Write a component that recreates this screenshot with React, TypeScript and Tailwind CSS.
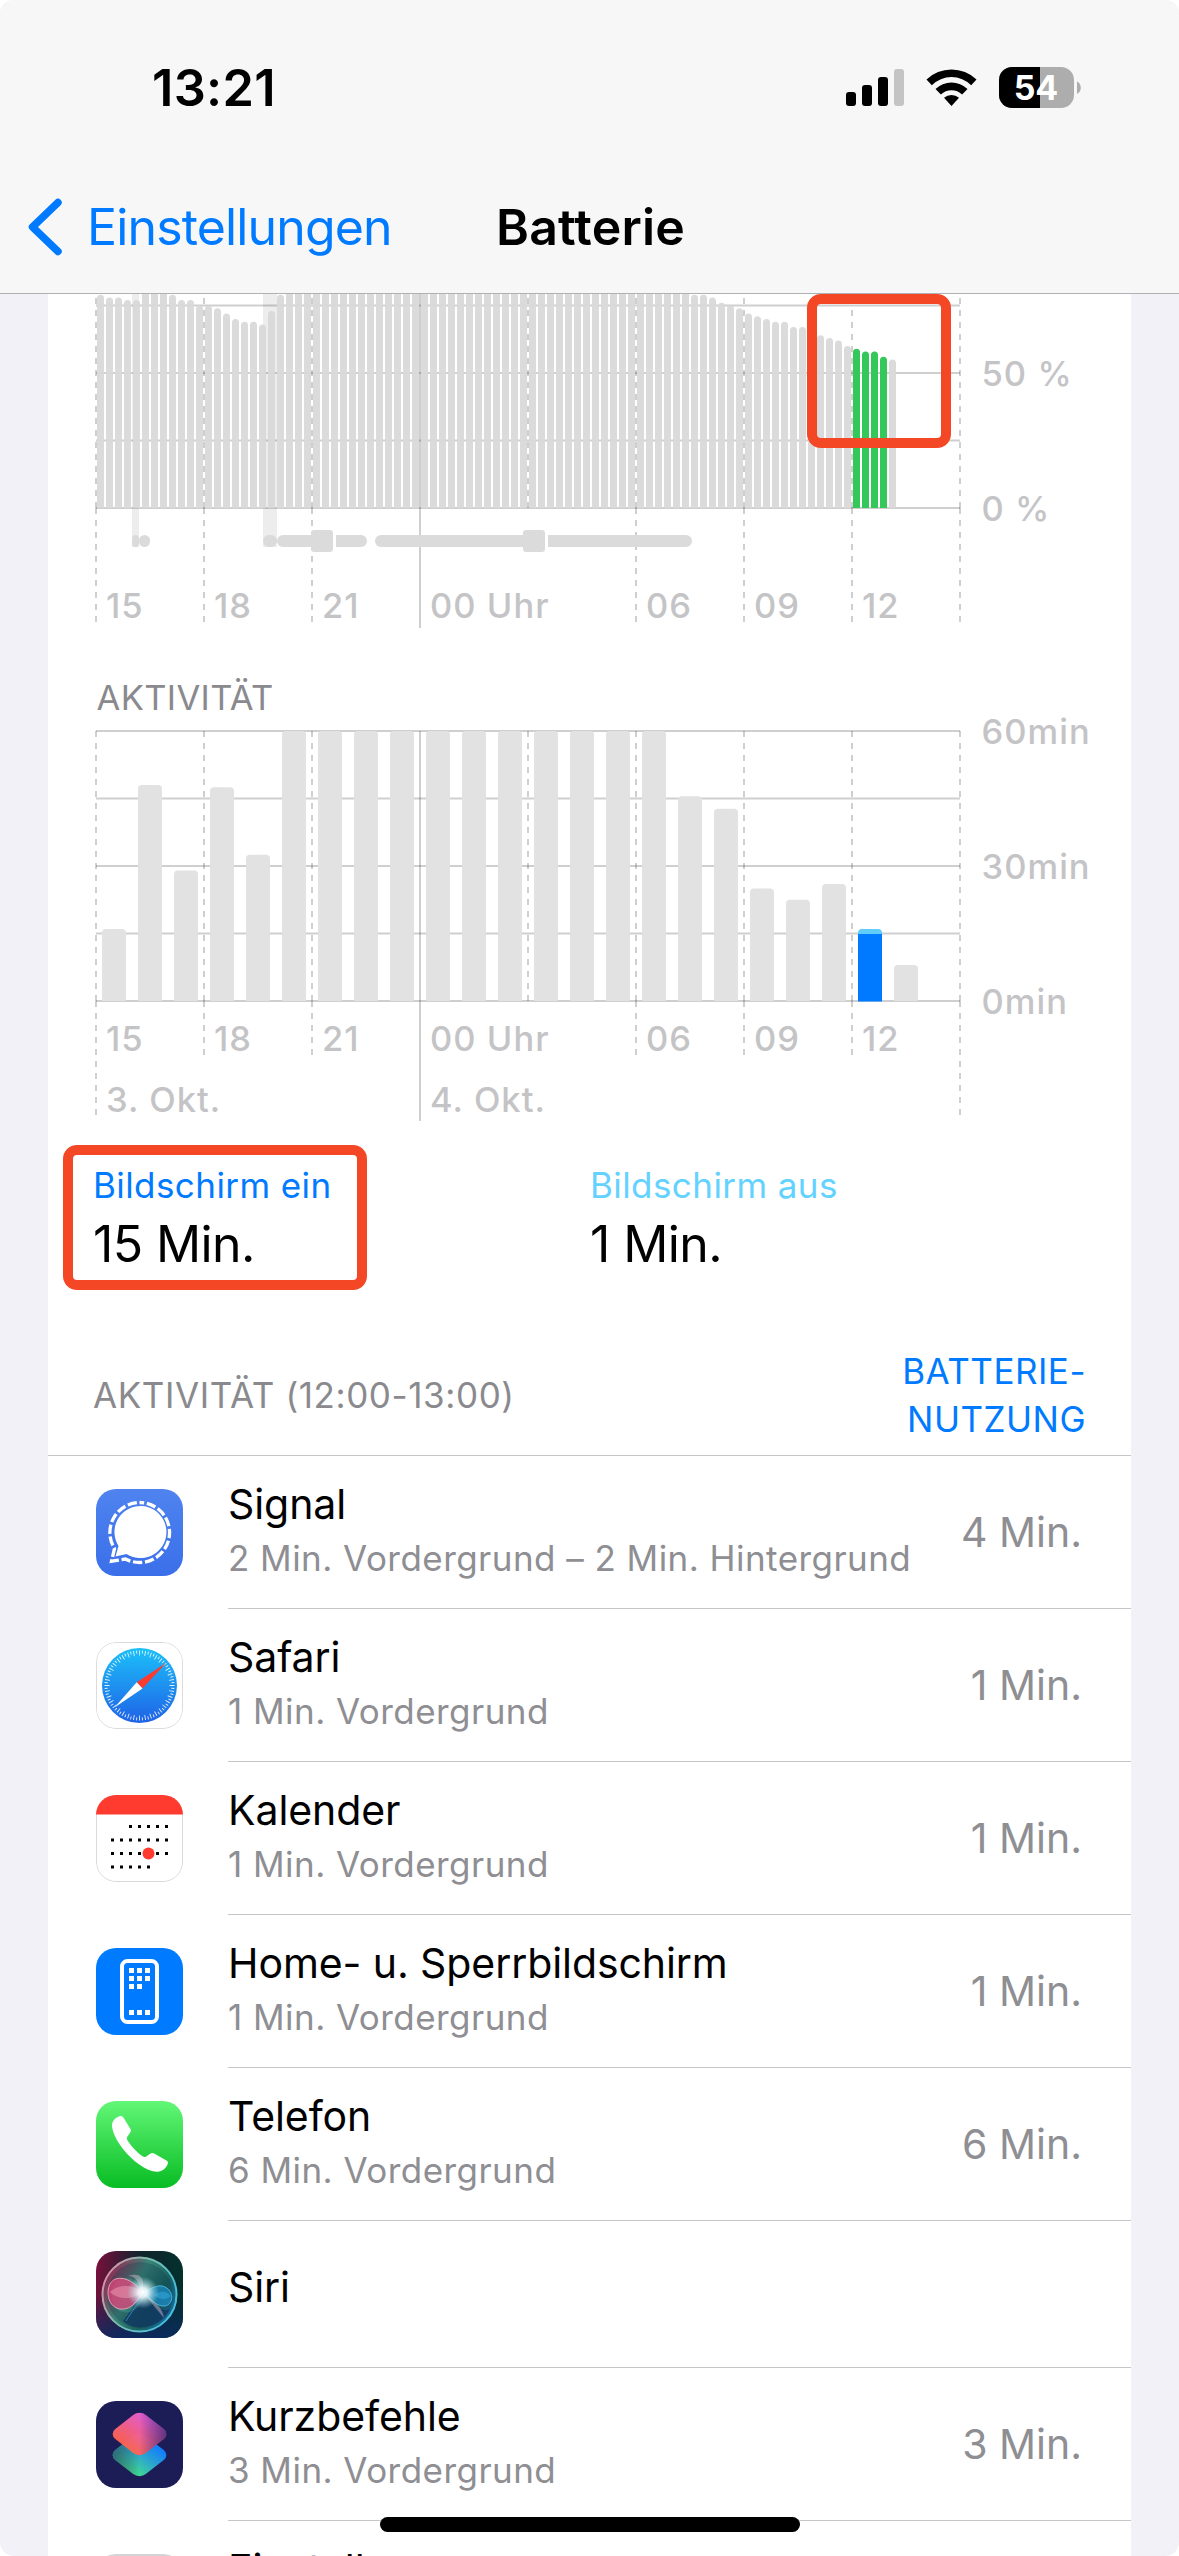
import type { ReactNode } from "react";

const HOURS = ["15", "18", "21", "00 Uhr", null, "06", "09", "12", null];

const LEVELS = [
  79, 78, 78, 77, 77, 84, 90, 84, 79, 77, 77, 75, 75, 74, 72, 70, 69, 69, 68,
  73, 79,
  ...Array(45).fill(100),
  79, 79, 78, 76, 75, 74, 72, 71, 70, 69, 69, 67, 67, 65, 64, 63, 62, 60, 59,
  58, 58, 56, 55,
];

const ACTIVITY = [
  16, 48, 29, 47.5, 32.5, 60, 60, 60, 60, 60, 60, 60, 60, 60, 60, 60, 45.5,
  42.7, 25, 22.5, 26, 16, 8,
];

function StatusIcons() {
  return (
    <svg width="236" height="42" viewBox="0 0 236 42">
      <rect x="0" y="25" width="10" height="14" rx="3" />
      <rect x="16" y="18" width="10" height="21" rx="3" />
      <rect x="32" y="10" width="10" height="29" rx="3" />
      <rect x="48" y="2" width="10" height="37" rx="3" fill="#c4c4c5" />
      <path d="M80.5 12.6a36 36 0 0 1 50 0l-5.3 5.6a28 28 0 0 0-39.4 0z" />
      <path d="M89.5 22a23 23 0 0 1 32 0l-5.4 5.6a15 15 0 0 0-21.2 0z" />
      <path d="M98 30.8a11.5 11.5 0 0 1 15 0L105.5 39z" />
      <clipPath id="battery">
        <rect x="153" y="0" width="75" height="41" rx="13" />
      </clipPath>
      <g clipPath="url(#battery)">
        <rect x="153" width="75" height="41" fill="#adadae" />
        <rect x="153" width="41" height="41" />
      </g>
      <path d="M231 14.5a7 7 0 0 1 0 12.4z" fill="#adadae" />
      <text
        x="190"
        y="33"
        textAnchor="middle"
        fill="#fff"
        className="text-[34px] font-bold"
      >
        54
      </text>
    </svg>
  );
}

function Header() {
  return (
    <header className="h-[294px] border-b border-[#b1b1b4] bg-[#f7f7f8]">
      <div className="flex h-[176px] items-center justify-between pr-[97px] pl-[152px]">
        <span className="text-[50.5px] font-semibold tracking-[0.006em]">
          13:21
        </span>
        <StatusIcons />
      </div>
      <div className="flex h-[102px] items-center">
        <svg
          className="ml-[26px]"
          width="40"
          height="60"
          viewBox="0 0 40 60"
          fill="none"
          stroke="#007aff"
          strokeWidth="7.5"
          strokeLinecap="round"
          strokeLinejoin="round"
        >
          <path d="M32 5.500 6.500 30 32 54.500" />
        </svg>
        <span className="ml-[21px] w-[409px] text-[50px] tracking-[-0.017em] text-[#007aff]">
          Einstellungen
        </span>
        <h1 className="text-[50px] font-semibold tracking-[0.004em]">
          Batterie
        </h1>
      </div>
    </header>
  );
}

function GridLabel({ x, y, children }: { x: number; y: number; children: ReactNode }) {
  return (
    <text
      x={x}
      y={y}
      fill="#c4c4c6"
      className="text-[34.5px] font-[450] tracking-[0.03em]"
    >
      {children}
    </text>
  );
}

// Both charts share the plot: origin at the left end of the zero line,
// 864 wide, 270 high, one vertical line every three hours.
function Grid({ deep }: { deep?: boolean }) {
  const tail = deep ? 54 : 114;
  return (
    <g stroke="#000" strokeOpacity="0.19" strokeWidth="2">
      {[0, 67.5, 135, 202.5, 270].map((y) => (
        <line key={y} x1="0" x2="864" y1={-y} y2={-y} />
      ))}
      {HOURS.map((label, i) => {
        const x = i * 108;
        if (label === "00 Uhr") {
          return <line key={i} x1={x} x2={x} y1="-270" y2="120" />;
        }
        const end = deep && (i === 0 || i === 8) ? 114 : tail;
        return (
          <g key={i} strokeDasharray="6 6">
            <line x1={x} x2={x} y1="-270" y2="0" />
            {i !== 4 && <line x1={x} x2={x} y1="0" y2={end} />}
          </g>
        );
      })}
    </g>
  );
}

function LevelChart() {
  return (
    <svg className="block" width="1083" height="352" viewBox="-48 -214 1083 352">
      <g fill="#ededee">
        <rect x="36" y="-214" width="7" height="253" />
        <rect x="167" y="-214" width="14" height="253" />
      </g>
      <Grid />
      {LEVELS.map((level, i) => {
        const h = level * 2.7;
        const x = i * 9 + 1;
        const active = i >= 84 && i < 88;
        return (
          <path
            key={i}
            d={`M${x} 0V${-h + 3.5}a3.500 3.500 0 0 1 7 0V0z`}
            fill={active ? "#34c759" : "#d9d9d9"}
            fillOpacity={active ? 1 : 0.95}
          />
        );
      })}
      <g fill="#dbdbdb">
        <rect x="36" y="27" width="7" height="12" rx="3.500" />
        <rect x="43" y="27" width="11" height="12" rx="5.500" />
        <rect x="167" y="27" width="14" height="12" rx="6" />
        <rect x="181" y="27" width="90" height="12" rx="6" />
        <rect x="279" y="27" width="317" height="12" rx="6" />
        <rect x="236" y="22" width="4" height="22" fill="#fff" />
        <rect x="448" y="22" width="4" height="22" fill="#fff" />
        <rect x="215" y="22" width="22" height="22" rx="3" />
        <rect x="427" y="22" width="22" height="22" rx="3" />
      </g>
      {HOURS.map(
        (label, i) =>
          label && (
            <GridLabel key={i} x={i * 108 + 10} y={110}>
              {label}
            </GridLabel>
          ),
      )}
      <GridLabel x={885.5} y={-122}>50 %</GridLabel>
      <GridLabel x={885.5} y={13}>0 %</GridLabel>
    </svg>
  );
}

function ActivityChart() {
  return (
    <svg className="block" width="1083" height="504" viewBox="-48 -355 1083 504">
      <text x="0.500" y="-291" fill="#8a8a8e" className="text-[34.5px] tracking-[0.01em]">
        AKTIVITÄT
      </text>
      <Grid deep />
      {ACTIVITY.map((min, i) => {
        const h = min * 4.5;
        const x = i * 36 + 6;
        const active = i === 21;
        return (
          <g key={i}>
            <path
              d={`M${x} 0V${-h + 4}q0-4 4-4h16q4 0 4 4V0z`}
              fill={active ? "#5fcdf7" : "#e2e2e2"}
            />
            {active && <rect x={x} y="-67" width="24" height="67.500" fill="#007aff" />}
          </g>
        );
      })}
      {HOURS.map(
        (label, i) =>
          label && (
            <GridLabel key={i} x={i * 108 + 10} y={50}>
              {label}
            </GridLabel>
          ),
      )}
      <GridLabel x={10} y={111}>3. Okt.</GridLabel>
      <GridLabel x={334} y={111}>4. Okt.</GridLabel>
      <GridLabel x={885.5} y={-257}>60min</GridLabel>
      <GridLabel x={885.5} y={-122}>30min</GridLabel>
      <GridLabel x={885.5} y={13}>0min</GridLabel>
    </svg>
  );
}

function AppIcon({ children }: { children?: ReactNode }) {
  return (
    <svg
      className="size-[87px] shrink-0 rounded-[20px]"
      width="87"
      height="87"
      viewBox="0 0 87 87"
    >
      {children}
    </svg>
  );
}

function SignalIcon() {
  return (
    <AppIcon>
      <linearGradient id="signal" x2="0" y2="1">
        <stop stopColor="#4f83ef" />
        <stop offset="1" stopColor="#3a6fea" />
      </linearGradient>
      <rect width="87" height="87" fill="url(#signal)" />
      <path
        d="M19.500 67.500l3-10.500A26 26 0 1 1 30.500 65z"
        fill="#fff"
      />
      <path
        d="M43.500 13.500A30 30 0 1 1 29.500 70L15.500 72.200 18.500 59.500A30 30 0 0 1 43.500 13.500"
        fill="none"
        stroke="#fff"
        strokeWidth="3.300"
        strokeDasharray="9.300 2.700"
        strokeDashoffset="4.600"
      />
    </AppIcon>
  );
}

function SafariIcon() {
  return (
    <AppIcon>
      <linearGradient id="safari" x2="0" y2="1">
        <stop stopColor="#1cc0f9" />
        <stop offset="1" stopColor="#1f62e6" />
      </linearGradient>
      <rect x="0.500" y="0.500" width="86" height="86" rx="19.500" fill="#fff" stroke="#dcdcde" />
      <circle cx="43.500" cy="43.500" r="37.500" fill="url(#safari)" />
      <g fill="none" stroke="#fff" strokeOpacity="0.85">
        <circle cx="43.500" cy="43.500" r="32.500" strokeWidth="5" pathLength="360" strokeDasharray="1.600 8.400" strokeDashoffset="0.800" />
        <circle cx="43.500" cy="43.500" r="33.500" strokeWidth="3" pathLength="360" strokeDasharray="1.600 8.400" strokeDashoffset="5.800" />
      </g>
      <path d="M70 21 40.700 40.200 46.500 46.500z" fill="#fb3b30" />
      <path d="M18.500 65.500 40.700 40.200 46.500 46.500z" fill="#fff" />
    </AppIcon>
  );
}

function KalenderIcon() {
  const rows = [
    [2, 3, 4, 5, 6],
    [0, 1, 2, 3, 4, 5, 6],
    [0, 1, 2, 3, 4, 5, 6],
    [0, 1, 2, 3, 4],
  ];
  return (
    <AppIcon>
      <rect x="0.500" y="0.500" width="86" height="86" rx="19.500" fill="#fff" stroke="#d9d9db" />
      <path d="M0 0h87v19.500H0z" fill="#ff3b30" />
      {rows.map((cols, r) =>
        cols.map((c) => (
          <rect key={`${r}-${c}`} x={15 + c * 9} y={30 + r * 13.5} width="3" height="3" />
        )),
      )}
      <circle cx="52.500" cy="58.500" r="6" fill="#ff3b30" />
    </AppIcon>
  );
}

function HomeIcon() {
  const cells = [
    [33, 20], [41, 20], [49, 20],
    [33, 28], [41, 28], [49, 28],
    [33, 36], [41, 36],
    [33, 62], [41, 62], [49, 62],
  ];
  return (
    <AppIcon>
      <rect width="87" height="87" fill="#007aff" />
      <rect x="26" y="13" width="35" height="61" rx="5.500" fill="none" stroke="#fff" strokeWidth="4" />
      {cells.map(([x, y]) => (
        <rect key={`${x}-${y}`} x={x} y={y} width="5" height="5" fill="#fff" />
      ))}
    </AppIcon>
  );
}

function TelefonIcon() {
  return (
    <AppIcon>
      <linearGradient id="phone" x2="0" y2="1">
        <stop stopColor="#62f777" />
        <stop offset="1" stopColor="#08bc23" />
      </linearGradient>
      <rect width="87" height="87" fill="url(#phone)" />
      <path
        d="M24.500 15c1.100-.2 2 .3 2.700 1.300L34.500 28c.6 1.200.5 2.200-.2 3.200l-3 4.500c-.8 1.300-.5 2.400.3 3.800C35 45 41 51.500 46.500 55.300c1.300.9 2.500.9 3.700.1l4.300-2.800c1.200-.8 2.400-.8 3.600-.1L70.500 59.500c1.500.9 1.800 2 1.200 3.600C70 67.500 66 71 61 70.700 50 70.500 36 59.500 27 48 20 39 15.800 29.500 16 24c.2-4.500 4-8 8.500-9z"
        fill="#fff"
      />
    </AppIcon>
  );
}

function SiriIcon() {
  return (
    <AppIcon>
      <linearGradient id="siri-bg" y2="0.100">
        <stop stopColor="#7c0f3c" />
        <stop offset="0.500" stopColor="#10242e" />
        <stop offset="1" stopColor="#04302c" />
      </linearGradient>
      <linearGradient id="siri-low" x2="0" y2="1">
        <stop offset="0.500" stopColor="#0c2a66" stopOpacity="0" />
        <stop offset="1" stopColor="#0c2a66" stopOpacity="0.850" />
      </linearGradient>
      <linearGradient id="siri-ball" x1="0" y1="0.200" x2="1" y2="0.800">
        <stop stopColor="#a11c4e" />
        <stop offset="0.400" stopColor="#3a8578" />
        <stop offset="0.700" stopColor="#17605e" />
        <stop offset="1" stopColor="#1a6aa8" />
      </linearGradient>
      <linearGradient id="siri-ring" x2="1" y2="0.500">
        <stop stopColor="#f08aa8" />
        <stop offset="0.500" stopColor="#7cbcae" />
        <stop offset="1" stopColor="#45bfdd" />
      </linearGradient>
      <radialGradient id="siri-glow">
        <stop stopColor="#fff" />
        <stop offset="0.300" stopColor="#f2fdff" stopOpacity="0.900" />
        <stop offset="1" stopColor="#9fe6ee" stopOpacity="0" />
      </radialGradient>
      <rect width="87" height="87" fill="url(#siri-bg)" />
      <rect width="87" height="87" fill="url(#siri-low)" />
      <circle cx="43.500" cy="43.500" r="37" fill="url(#siri-ball)" stroke="url(#siri-ring)" strokeWidth="2" />
      <circle cx="44" cy="44" r="33" fill="#0b2c44" fillOpacity="0.250" />
      <path d="M46 41C56 52 66 63 74 58 66 76 40 82 27 70 34 62 40 50 46 41z" fill="#103560" fillOpacity="0.750" />
      <path d="M46 41C38 20 16 20 13 38c-4 26 26 30 33 3z" fill="#7fd0c8" fillOpacity="0.200" transform="translate(3 2)" />
      <path d="M46 41C36 26 14 20 12 40c-1 22 24 26 34 1z" fill="#e0447a" fillOpacity="0.750" stroke="#ffc2d2" strokeOpacity="0.700" />
      <path d="M46 41c-8-8-24-8-32 0 8 8 24 8 32 0z" fill="#f9a9bd" fillOpacity="0.450" />
      <path d="M46 41c8-2 16-9 23-5 9 4 9 17 0 19-9 1-15-8-23-14z" fill="#1d8fc8" fillOpacity="0.700" stroke="#5fd0ee" strokeOpacity="0.700" />
      <path d="M58 44c6-5 12-4 17 1-5 4-11 4-17-1z" fill="#3fb8f0" fillOpacity="0.400" />
      <path d="M46 41c4-14-2-20-14-16 8 0 10 6 14 16zM48 43l20 24c-1-9-8-16-20-24z" fill="#dcc0cc" fillOpacity="0.450" />
      <path d="M46 42c-4 12-10 18-16 28" fill="none" stroke="#3c9be0" strokeOpacity="0.700" />
      <circle cx="47" cy="41.500" r="16" fill="url(#siri-glow)" />
    </AppIcon>
  );
}

function KurzbefehleIcon() {
  return (
    <AppIcon>
      <linearGradient id="sc-warm" x1="0" y1="1" x2="0" y2="0">
        <stop stopColor="#ff634d" />
        <stop offset="0.450" stopColor="#f7608c" />
        <stop offset="1" stopColor="#e85fdc" />
      </linearGradient>
      <linearGradient id="sc-cool" x1="0" y1="1" x2="0" y2="0">
        <stop stopColor="#41e08c" />
        <stop offset="0.550" stopColor="#2ba3d0" />
        <stop offset="1" stopColor="#107bff" />
      </linearGradient>
      <linearGradient id="sc-right" x1="0.500" y1="0.500" x2="1" y2="0">
        <stop stopColor="#1d1d57" stopOpacity="0" />
        <stop offset="1" stopColor="#1d1d57" stopOpacity="0.750" />
      </linearGradient>
      <linearGradient id="sc-left" x1="0.500" y1="0.500" x2="0" y2="1">
        <stop stopColor="#1d1d57" stopOpacity="0" />
        <stop offset="1" stopColor="#2b4c70" stopOpacity="0.850" />
      </linearGradient>
      <rect width="87" height="87" fill="#1c1c57" />
      <g transform="translate(43.500 54) scale(1.270 1) rotate(45)">
        <rect x="-17" y="-17" width="34" height="34" rx="7" fill="url(#sc-cool)" />
        <rect x="-17" y="-17" width="34" height="34" rx="7" fill="url(#sc-left)" />
      </g>
      <g transform="translate(43.500 33) scale(1.270 1) rotate(45)">
        <rect x="-17" y="-17" width="34" height="34" rx="7" fill="url(#sc-warm)" fillOpacity="0.960" />
        <rect x="-17" y="-17" width="34" height="34" rx="7" fill="url(#sc-right)" />
      </g>
    </AppIcon>
  );
}

function EinstellungenIcon() {
  return (
    <AppIcon>
      <rect width="87" height="87" fill="#d3d3d8" />
    </AppIcon>
  );
}

const APPS = [
  { name: "Signal", detail: "2 Min. Vordergrund – 2 Min. Hintergrund", time: "4 Min.", Icon: SignalIcon },
  { name: "Safari", detail: "1 Min. Vordergrund", time: "1 Min.", Icon: SafariIcon },
  { name: "Kalender", detail: "1 Min. Vordergrund", time: "1 Min.", Icon: KalenderIcon },
  { name: "Home- u. Sperrbildschirm", detail: "1 Min. Vordergrund", time: "1 Min.", Icon: HomeIcon },
  { name: "Telefon", detail: "6 Min. Vordergrund", time: "6 Min.", Icon: TelefonIcon },
  { name: "Siri", Icon: SiriIcon, single: true },
  { name: "Kurzbefehle", detail: "3 Min. Vordergrund", time: "3 Min.", Icon: KurzbefehleIcon },
  { name: "Einstellungen", Icon: EinstellungenIcon },
];

type AppRowProps = {
  name: string;
  detail?: string;
  time?: string;
  single?: boolean;
  Icon: () => ReactNode;
};

function AppRow({ name, detail, time, single, Icon }: AppRowProps) {
  return (
    <li className={single ? "flex h-[147px] pl-12" : "flex h-[153px] pl-12"}>
      <div className="mr-[45px] flex items-center">
        <Icon />
      </div>
      <div className="flex flex-1 items-center justify-between border-b border-[#c6c6c8] pr-[49px]">
        <div className={single ? "self-start pt-[39px]" : "self-start pt-[21px]"}>
          <p className="text-[41px] leading-[54px] tracking-[-0.002em]">{name}</p>
          {detail && (
            <p className="mt-[2px] text-[35px] leading-[50px] tracking-[0.013em] whitespace-nowrap text-[#8e8e93]">
              {detail}
            </p>
          )}
        </div>
        {time && (
          <span className="pt-[2px] text-[41px] whitespace-nowrap text-[#8e8e93]">{time}</span>
        )}
      </div>
    </li>
  );
}

export default function App() {
  return (
    <div className="bg-white">
      <div className="relative h-[2556px] w-[1179px] overflow-hidden rounded-[14px] bg-[#f2f1f7] font-['Inter',sans-serif] text-black">
        <Header />
        <main className="mx-12 bg-white">
          <LevelChart />
          <ActivityChart />
          <div className="flex h-[207px] pt-[13px] pl-[45px]">
            <div className="w-[497px]">
              <p className="text-[35px] leading-[44px] tracking-[0.012em] text-[#007aff]">Bildschirm ein</p>
              <p className="mt-[7px] text-[50px] leading-[60px] tracking-[-0.012em]">15 Min.</p>
            </div>
            <div>
              <p className="text-[35px] leading-[44px] tracking-[0.012em] text-[#64d2ff]">Bildschirm aus</p>
              <p className="mt-[7px] text-[50px] leading-[60px] tracking-[-0.012em]">1 Min.</p>
            </div>
          </div>
          <div className="flex h-[99px] items-center justify-between border-b border-[#c6c6c8] pr-[45px] pb-[22px] pl-[45px]">
            <h2 className="text-[35px] tracking-[0.017em] text-[#8a8a8e]">AKTIVITÄT (12:00-13:00)</h2>
            <p className="text-right text-[35px] leading-[48px] tracking-[0.014em] text-[#007aff]">
              BATTERIE-
              <br />
              NUTZUNG
            </p>
          </div>
          <ul>
            {APPS.map((app) => (
              <AppRow key={app.name} {...app} />
            ))}
          </ul>
        </main>
        <div className="absolute top-[294px] left-[807px] h-[154px] w-[144px] rounded-[14px] border-[10px] border-[#f44725]" />
        <div className="absolute top-[1145px] left-[63px] h-[145px] w-[304px] rounded-[14px] border-[10px] border-[#f44725]" />
        <div className="absolute bottom-[24px] left-[380px] h-[15px] w-[420px] rounded-full bg-black" />
      </div>
    </div>
  );
}
